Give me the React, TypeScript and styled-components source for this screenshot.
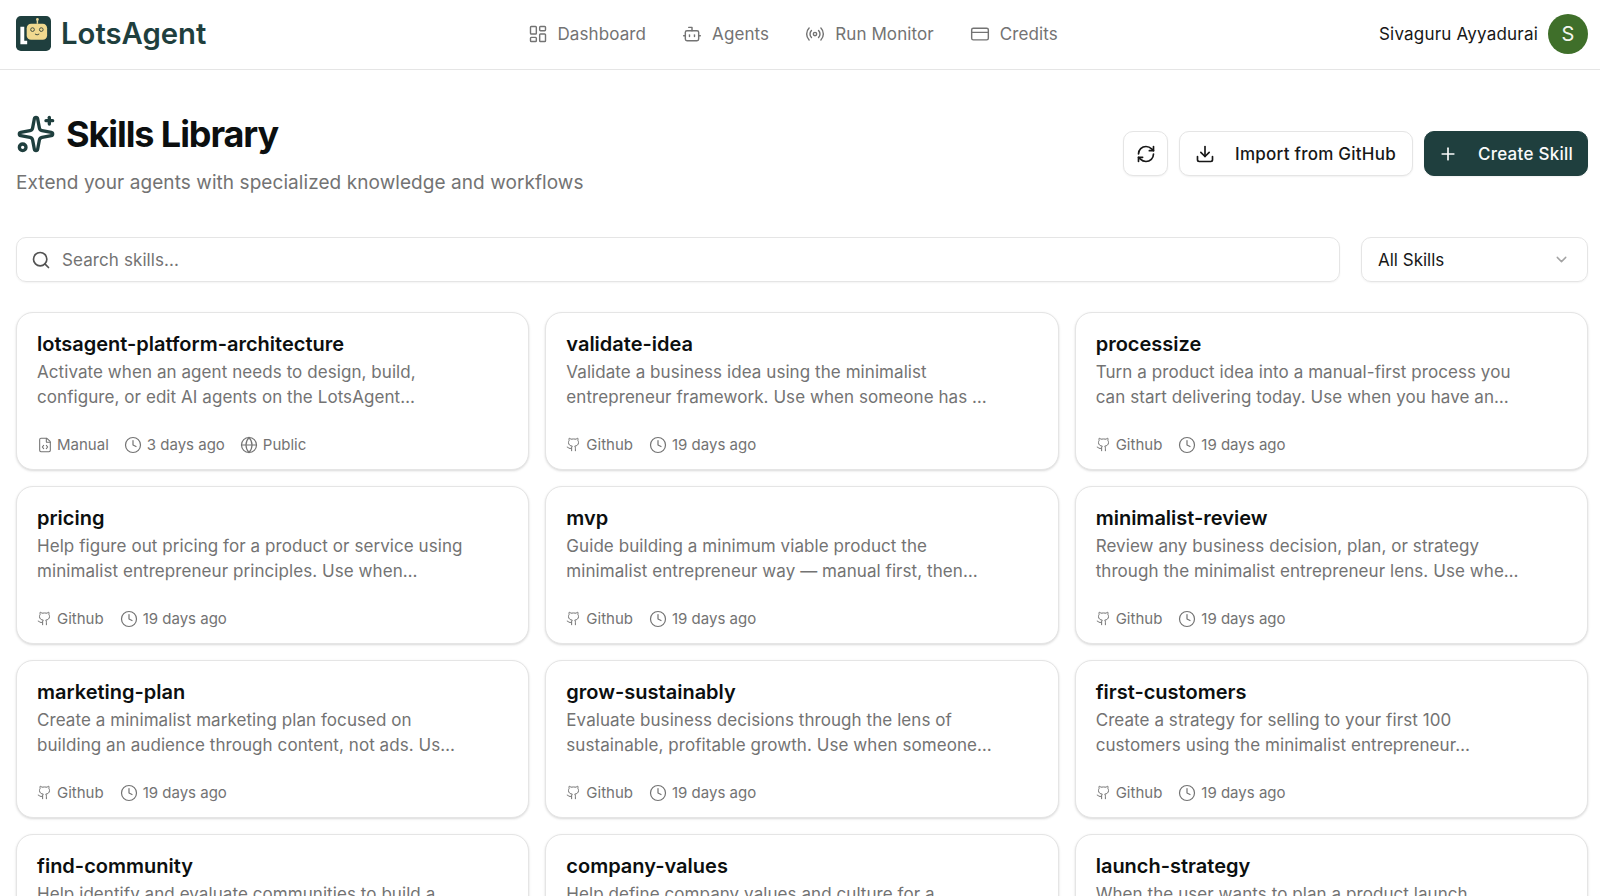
import * as React from "react";
import styled, { createGlobalStyle } from "styled-components";
import {
  Bot,
  ChevronDown,
  Clock,
  CreditCard,
  Download,
  FileCode,
  Github,
  Globe,
  LayoutDashboard,
  Plus,
  Radio,
  RefreshCw,
  Search,
  Sparkles,
} from "lucide-react";

const GlobalStyle = createGlobalStyle`
  html, body {
    margin: 0;
    height: 100%;
    overflow: hidden;
    background: #ffffff;
    font-family: Inter, "Liberation Sans", sans-serif;
    color: #0c0f0f;
  }
  * { box-sizing: border-box; }
`;

const Page = styled.div`
  width: 1600px;
  height: 896px;
  overflow: hidden;
  background: #fff;
`;

const TopBar = styled.header`
  height: 70px;
  padding: 0 12px 2px 16px;
  display: flex;
  align-items: center;
  justify-content: space-between;
  border-bottom: 1px solid #e5e5e5;
`;

const Brand = styled.div`
  display: flex;
  align-items: center;
  gap: 10px;
`;

const BrandName = styled.span`
  font-size: 29.3px;
  font-weight: 600;
  color: #1f3f3e;
`;

const Nav = styled.nav`
  display: flex;
  align-items: center;
  gap: 36px;
`;

const NavItem = styled.a`
  display: flex;
  align-items: center;
  gap: 10px;
  font-size: 17px;
  letter-spacing: 0.1px;
  color: #737373;
  svg {
    width: 20px;
    height: 20px;
    stroke-width: 1.7;
  }
`;

const User = styled.div`
  display: flex;
  align-items: center;
  gap: 10px;
`;

const UserName = styled.span`
  font-size: 17px;
  letter-spacing: 0.2px;
  color: #171717;
`;

const Avatar = styled.div`
  width: 40px;
  height: 40px;
  border-radius: 50%;
  background: #3f6f2a;
  color: #f4f6ee;
  display: flex;
  align-items: center;
  justify-content: center;
  font-size: 20px;
`;

const Main = styled.main`
  padding: 0 12px 0 16px;
`;

const PageHead = styled.section`
  height: 167px;
  padding-top: 40px;
  display: flex;
  align-items: flex-start;
  justify-content: space-between;
`;

const TitleRow = styled.div`
  display: flex;
  align-items: center;
  gap: 10px;
  svg {
    width: 40px;
    height: 40px;
    color: #1f3f3e;
    stroke-width: 2;
  }
`;

const Title = styled.h1`
  margin: 0;
  font-size: 36px;
  line-height: 48px;
  font-weight: 700;
  letter-spacing: -0.03em;
  color: #0c0f0f;
`;

const Subtitle = styled.p`
  margin: 11px 0 0;
  font-size: 19px;
  letter-spacing: 0.07px;
  line-height: 28px;
  color: #737373;
`;

const Actions = styled.div`
  display: flex;
  gap: 11px;
  margin-top: 21px;
`;

const Button = styled.button<{ $primary?: boolean }>`
  height: 45px;
  padding: ${({ $primary }) => ($primary ? "0 14px 0 13px" : "0 16px 0 15px")};
  display: flex;
  align-items: center;
  gap: 20px;
  border-radius: 10px;
  font: inherit;
  font-size: 17px;
  font-weight: 500;
  letter-spacing: 0.25px;
  border: 1px solid ${({ $primary }) => ($primary ? "#1f3f3e" : "#e5e5e5")};
  background: ${({ $primary }) => ($primary ? "#1f3f3e" : "#fff")};
  color: ${({ $primary }) => ($primary ? "#fafafa" : "#171717")};
  box-shadow: 0 1px 2px rgba(0, 0, 0, 0.06);
  svg {
    width: 20px;
    height: 20px;
  }
`;

const IconButton = styled(Button)`
  width: 45px;
  padding: 0;
  justify-content: center;
`;

const FilterRow = styled.div`
  display: flex;
  gap: 21px;
  margin-bottom: 30px;
`;

const SearchBox = styled.div`
  flex: 1;
  height: 45px;
  padding: 0 14px;
  display: flex;
  align-items: center;
  gap: 11px;
  border: 1px solid #e5e5e5;
  border-radius: 10px;
  box-shadow: 0 1px 2px rgba(0, 0, 0, 0.05);
  font-size: 17px;
  letter-spacing: 0.1px;
  color: #737373;
  svg {
    width: 20px;
    height: 20px;
    color: #525252;
  }
`;

const SelectBox = styled.div`
  width: 227px;
  height: 45px;
  padding: 0 17px 0 16px;
  display: flex;
  align-items: center;
  justify-content: space-between;
  border: 1px solid #e5e5e5;
  border-radius: 10px;
  box-shadow: 0 1px 2px rgba(0, 0, 0, 0.05);
  font-size: 17px;
  color: #171717;
  svg {
    width: 17px;
    height: 17px;
    color: #a3a3a3;
  }
`;

const Grid = styled.div`
  display: grid;
  grid-template-columns: repeat(3, 1fr);
  gap: 16px;
`;

const Card = styled.article`
  height: 158px;
  padding: 19px 20px 0;
  border: 1px solid #e5e5e5;
  border-radius: 17px;
  background: #fff;
  box-shadow: 0 1px 3px rgba(0, 0, 0, 0.1), 0 1px 2px rgba(0, 0, 0, 0.06);
  display: flex;
  flex-direction: column;
`;

const CardTitle = styled.h3`
  margin: 0;
  font-size: 20px;
  line-height: 24px;
  font-weight: 600;
  color: #0c0f0f;
`;

const CardText = styled.p`
  margin: 4px 0 0;
  font-size: 17px;
  letter-spacing: 0.07px;
  line-height: 25px;
  color: #737373;
`;

const Meta = styled.div<{ $tight?: boolean }>`
  margin-top: auto;
  margin-bottom: 14.5px;
  display: flex;
  align-items: center;
  gap: ${({ $tight }) => ($tight ? "15px" : "16px")};
  font-size: 15px;
  line-height: 20px;
  color: #737373;
`;

const MetaItem = styled.span`
  display: flex;
  align-items: center;
  gap: 5px;
  svg {
    width: 18px;
    height: 18px;
    stroke-width: 1.6;
  }
`;

const SourceItem = styled(MetaItem)<{ $size: number }>`
  gap: ${({ $size }) => 20 - $size}px;
  svg {
    width: ${({ $size }) => $size}px;
    height: ${({ $size }) => $size}px;
  }
`;

const LogoMark = () => (
  <svg width="35" height="35" viewBox="0 0 36 36">
    <rect width="36" height="36" rx="5" fill="#1f3f3e" />
    <path d="M4.5 11h4v14.5h3V29h-7z" fill="#fff" />
    <line x1="22" y1="4" x2="22" y2="8" stroke="#e8d89a" strokeWidth="1.5" />
    <circle cx="22" cy="3.5" r="1.4" fill="#e8d89a" />
    <rect x="11" y="8" width="21" height="16.5" rx="4.5" fill="#f0d98f" />
    <circle cx="17" cy="14" r="1.9" fill="none" stroke="#3d4a3e" strokeWidth="1" />
    <circle cx="26" cy="14" r="1.9" fill="none" stroke="#3d4a3e" strokeWidth="1" />
    <path d="M19.5 18.5q2.2 1.8 4.4 0" fill="none" stroke="#3d4a3e" strokeWidth="1" />
  </svg>
);

type Skill = {
  name: string;
  lines: [string, string];
  manual?: boolean;
};

const skills: Skill[] = [
  {
    name: "lotsagent-platform-architecture",
    lines: [
      "Activate when an agent needs to design, build,",
      "configure, or edit AI agents on the LotsAgent…",
    ],
    manual: true,
  },
  {
    name: "validate-idea",
    lines: [
      "Validate a business idea using the minimalist",
      "entrepreneur framework. Use when someone has …",
    ],
  },
  {
    name: "processize",
    lines: [
      "Turn a product idea into a manual-first process you",
      "can start delivering today. Use when you have an…",
    ],
  },
  {
    name: "pricing",
    lines: [
      "Help figure out pricing for a product or service using",
      "minimalist entrepreneur principles. Use when…",
    ],
  },
  {
    name: "mvp",
    lines: [
      "Guide building a minimum viable product the",
      "minimalist entrepreneur way — manual first, then…",
    ],
  },
  {
    name: "minimalist-review",
    lines: [
      "Review any business decision, plan, or strategy",
      "through the minimalist entrepreneur lens. Use whe…",
    ],
  },
  {
    name: "marketing-plan",
    lines: [
      "Create a minimalist marketing plan focused on",
      "building an audience through content, not ads. Us…",
    ],
  },
  {
    name: "grow-sustainably",
    lines: [
      "Evaluate business decisions through the lens of",
      "sustainable, profitable growth. Use when someone…",
    ],
  },
  {
    name: "first-customers",
    lines: [
      "Create a strategy for selling to your first 100",
      "customers using the minimalist entrepreneur…",
    ],
  },
  {
    name: "find-community",
    lines: ["Help identify and evaluate communities to build a", "business around."],
  },
  {
    name: "company-values",
    lines: ["Help define company values and culture for a", "minimalist business."],
  },
  {
    name: "launch-strategy",
    lines: ["When the user wants to plan a product launch", "or feature announcement."],
  },
];

const SkillCard = ({ skill }: { skill: Skill }) => (
  <Card>
    <CardTitle>{skill.name}</CardTitle>
    <CardText>
      {skill.lines[0]}
      <br />
      {skill.lines[1]}
    </CardText>
    {skill.manual ? (
      <Meta $tight>
        <SourceItem $size={16}>
          <FileCode />
          Manual
        </SourceItem>
        <MetaItem>
          <Clock />3 days ago
        </MetaItem>
        <MetaItem>
          <Globe />
          Public
        </MetaItem>
      </Meta>
    ) : (
      <Meta>
        <SourceItem $size={15}>
          <Github />
          Github
        </SourceItem>
        <MetaItem>
          <Clock />
          19 days ago
        </MetaItem>
      </Meta>
    )}
  </Card>
);

export default function App() {
  return (
    <Page>
      <GlobalStyle />
      <TopBar>
        <Brand>
          <LogoMark />
          <BrandName>LotsAgent</BrandName>
        </Brand>
        <Nav>
          <NavItem>
            <LayoutDashboard />
            Dashboard
          </NavItem>
          <NavItem>
            <Bot />
            Agents
          </NavItem>
          <NavItem>
            <Radio />
            Run Monitor
          </NavItem>
          <NavItem>
            <CreditCard />
            Credits
          </NavItem>
        </Nav>
        <User>
          <UserName>Sivaguru Ayyadurai</UserName>
          <Avatar>S</Avatar>
        </User>
      </TopBar>
      <Main>
        <PageHead>
          <div>
            <TitleRow>
              <Sparkles />
              <Title>Skills Library</Title>
            </TitleRow>
            <Subtitle>Extend your agents with specialized knowledge and workflows</Subtitle>
          </div>
          <Actions>
            <IconButton>
              <RefreshCw />
            </IconButton>
            <Button>
              <Download />
              Import from GitHub
            </Button>
            <Button $primary>
              <Plus />
              Create Skill
            </Button>
          </Actions>
        </PageHead>
        <FilterRow>
          <SearchBox>
            <Search />
            Search skills...
          </SearchBox>
          <SelectBox>
            All Skills
            <ChevronDown />
          </SelectBox>
        </FilterRow>
        <Grid>
          {skills.map(skill => (
            <SkillCard key={skill.name} skill={skill} />
          ))}
        </Grid>
      </Main>
    </Page>
  );
}
